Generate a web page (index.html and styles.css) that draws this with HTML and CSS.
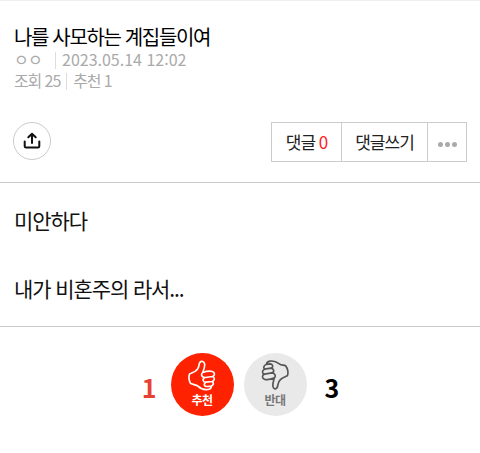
FILE: index.html
```html
<!DOCTYPE html>
<html lang="ko">
<head>
<meta charset="utf-8">
<title>나를 사모하는 계집들이여</title>
<link rel="stylesheet" href="styles.css">
</head>
<body>
<header class="post-head">
  <h1 class="title">나를 사모하는 계집들이여</h1>
  <div class="meta"><span class="author">ㅇㅇ</span><i class="bar"></i><span class="date">2023.05.14 12:02</span></div>
  <div class="meta"><span class="views">조회 25</span><i class="bar bar-near"></i><span class="likes">추천 1</span></div>
  <div class="tools">
    <button class="share" aria-label="공유">
      <svg viewBox="0 0 18 18" width="18" height="18"><path d="M1.7 9.4v4.8q0 1.4 1.4 1.4h11.8q1.4 0 1.4-1.4V9.4M9 11V2M5.3 5.3L9 1.7l3.7 3.6"/></svg>
    </button>
    <div class="actions">
      <a class="action count">댓글 <b>0</b></a>
      <a class="action write">댓글쓰기</a>
      <a class="action more"><i></i><i></i><i></i></a>
    </div>
  </div>
</header>
<main class="content">
  <p>미안하다</p>
  <p>내가 비혼주의 라서...</p>
</main>
<section class="votes">
  <strong class="num up-num">1</strong>
  <button class="vote up">
    <svg viewBox="0 0 84 92" width="28" height="31"><path d="M8 70C3 63 1 49 5 41C14 37 24 34 29 26C34 19 32 11 36 6C40 1 49 4 50 12C51 21 47 29 44 37C53 34 65 32 73 34C82 37 81 47 73 49L52 52C41 53 38 43 44 37M73 49C82 52 80 62 72 64L54 66C45 67 42 57 50 53M72 64C79 68 76 76 69 78L57 79C49 80 46 71 53 67M69 78C71 84 65 88 59 88C47 90 38 86 30 78C24 73 16 74 8 70"/></svg>
    <span>추천</span>
  </button>
  <button class="vote down">
    <svg viewBox="0 0 84 92" width="28" height="31"><path d="M74 17C80 24 83 39 79 47C70 51 62 53 56 61C50 69 51 77 48 83C44 89 37 86 36 79C34 70 38 62 40 53C31 57 18 60 10 57C2 54 3 44 11 42L32 38C41 38 46 47 40 53M11 42C2 40 3 30 11 27L29 24C38 24 41 34 34 38M11 27C6 22 9 15 16 13L27 11C35 11 38 20 31 24M16 13C17 7 21 4 27 3C39 1 47 5 55 11C61 16 68 14 74 17"/></svg>
    <span>반대</span>
  </button>
  <strong class="num down-num">3</strong>
</section>
</body>
</html>
```

FILE: styles.css
```css
* { box-sizing: border-box; }
body {
  margin: 0;
  background: #fff;
  color: #111;
  font-family: "Noto Sans CJK KR", sans-serif;
  border-top: 1px solid #eee;
}
button { padding: 0; font-family: inherit; }
.post-head {
  height: 182px;
  padding: 21px 13px 0 13px;
  border-bottom: 1px solid #ccc;
}
.title {
  margin: 0;
  padding-left: 1px;
  height: 27px;
  font-size: 20px;
  font-weight: 400;
  line-height: 30px;
  letter-spacing: -1.35px;
  color: #000;
}
.meta {
  display: flex;
  align-items: center;
  height: 21px;
  padding-left: 1px;
  font-size: 16px;
  line-height: 20px;
  color: #aaa;
  white-space: nowrap;
}
.meta span { margin-top: -2px; }
.author { width: 41px; letter-spacing: -0.8px; }
.date { letter-spacing: 0; }
.views, .likes { letter-spacing: -1.1px; }
.bar { width: 1px; height: 17px; margin: 2px 6px 0 0; background: #ddd; }
.bar-near { margin-left: 6px; }
.tools {
  display: flex;
  justify-content: space-between;
  align-items: center;
  margin-top: 31px;
  height: 40px;
}
.share {
  display: flex;
  align-items: center;
  justify-content: center;
  width: 38px;
  height: 38px;
  margin-bottom: 2px;
  border: 1px solid #ccc;
  border-radius: 50%;
  background: #fff;
}
.share svg { fill: none; stroke: #111; stroke-width: 2; stroke-linecap: round; stroke-linejoin: round; }
.actions {
  display: flex;
  height: 40px;
  border: 1px solid #ccc;
}
.action {
  display: flex;
  align-items: center;
  justify-content: center;
  padding-bottom: 2px;
  font-size: 17px;
  letter-spacing: -1px;
  color: #222;
  white-space: pre;
}
.action + .action { border-left: 1px solid #ccc; }
.action b { font-weight: 400; color: #f22; }
.count { width: 69px; }
.write { width: 86px; }
.more { width: 39px; gap: 2px; padding-top: 4px; padding-bottom: 0; }
.more i { width: 5px; height: 5px; border-radius: 50%; background: #aaa; }
.content {
  height: 144px;
  padding: 20px 14px 0 14px;
  border-bottom: 1px solid #ccc;
}
.content p {
  margin: 0 0 34px;
  font-size: 21px;
  line-height: 34px;
  letter-spacing: -1.1px;
}
.votes {
  display: flex;
  align-items: center;
  justify-content: center;
  height: 116px;
  padding-left: 1px;
}
.num { font-size: 25px; line-height: 30px; font-weight: 700; padding-top: 4px; }
.up-num { color: #e74133; margin-right: 14px; }
.down-num { color: #000; margin-left: 18px; }
.vote {
  display: flex;
  flex-direction: column;
  align-items: center;
  width: 63px;
  height: 63px;
  margin-bottom: 1px;
  padding-top: 7px;
  border: 0;
  border-radius: 50%;
}
.vote svg { fill: none; stroke: currentColor; stroke-width: 5; stroke-linecap: round; stroke-linejoin: round; }
.vote span { font-size: 12px; line-height: 18px; font-weight: 700; letter-spacing: -0.5px; }
.up { margin-right: 10px; background: #ff2200; color: #fff; }
.down { background: #e9e9e9; color: #555; }
.down span { color: #777; }
```
